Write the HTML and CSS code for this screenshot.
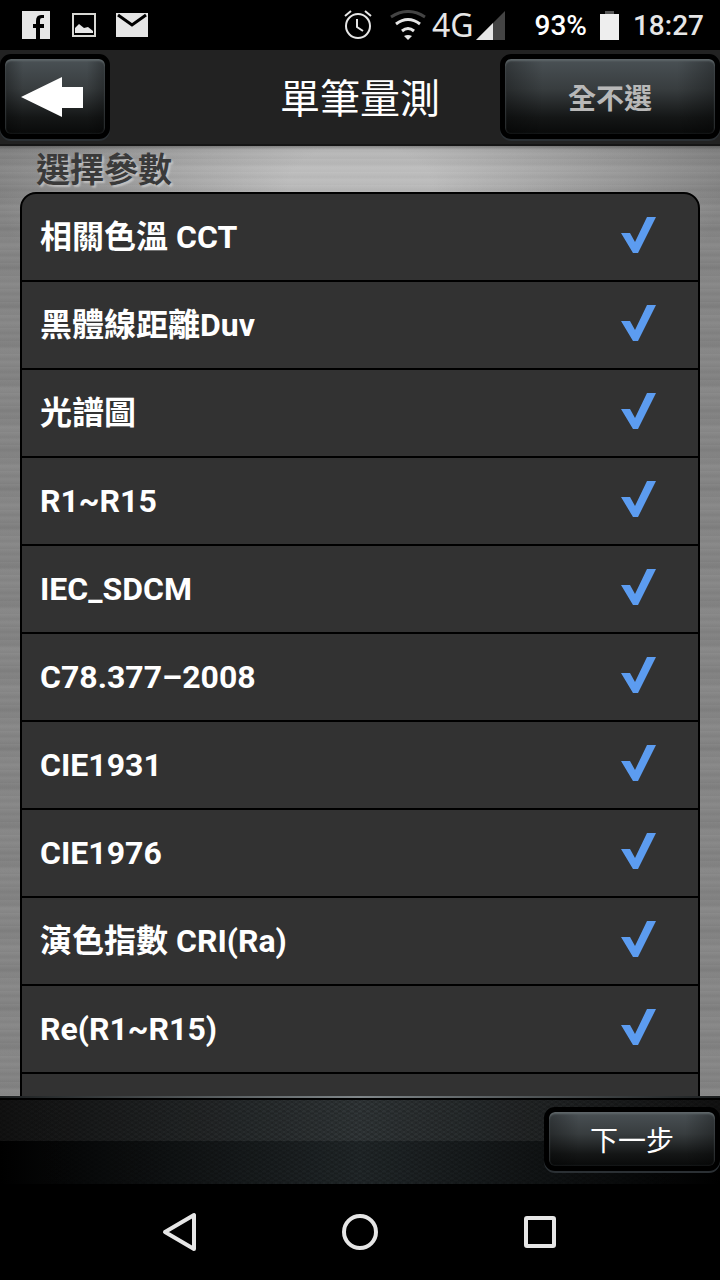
FILE: index.html
```html
<!DOCTYPE html>
<html lang="zh-Hant">
<head>
  <meta charset="UTF-8">
  <meta name="viewport" content="width=device-width,initial-scale=1">
  <title>單筆量測</title>
  <link rel="stylesheet" href="styles.css">
</head>
<body>

  <div class="status">
    <div class="status-left">
      <svg width="28" height="28" viewBox="0 0 28 28"><path fill="#e6e6e6" d="M0 0h28v28H18V17h4v-4h-4V9q0-2 2-2h2V4h-3q-5 0-5 6v3h-3v4h3v11H0z"/></svg>
      <svg class="picture" width="24" height="24" viewBox="0 0 24 24"><path fill="none" stroke="#d8d8d4" stroke-width="2" d="M1 1h22v22H1z"/><path fill="#e6e6e6" d="M3 20v-5l4-4 5 4 4-1 5 4v2z"/></svg>
      <svg class="mail" width="32" height="24" viewBox="0 0 32 24"><path fill="#e6e6e6" d="M0 0h32v24H0z"/><path fill="none" stroke="#000" stroke-width="3" d="M2 2l14 10L30 2"/></svg>
    </div>
    <div class="status-right">
      <svg class="alarm" width="28" height="30" viewBox="0 0 28 30"><g fill="none" stroke="#e6e6e6" stroke-width="2"><circle cx="14" cy="16" r="12"/><path d="M13 9v8l6 4"/><path d="M1 6l6-5M27 6l-6-5"/></g></svg>
      <svg class="wifi" width="36" height="30" viewBox="0 0 36 30"><g fill="none" stroke="#e6e6e6" stroke-width="3"><path stroke="#444" d="M1 7q17-11 34 0"/><path d="M6 14q12-9 24 0"/><path d="M12 21q6-5 12 0"/></g><path fill="#e6e6e6" d="M14 26q4-2 8 0l-4 4z"/></svg>
      <span class="network">4G</span>
      <svg class="signal" width="29" height="29" viewBox="0 0 29 29"><path fill="#444" d="M29 0v29H0z"/><path fill="#e6e6e6" d="M17 12v17H0z"/></svg>
      <span class="charge">93%</span>
      <svg class="battery" width="19" height="29" viewBox="0 0 19 29"><path fill="#555" d="M5 0h9v4H5z"/><path fill="#eee" d="M0 3h19v26H0z"/></svg>
      <time class="clock">18:27</time>
    </div>
  </div>

  <header class="topbar">
    <button class="btn back" type="button" aria-label="返回">
      <svg width="70" height="40" viewBox="0 0 70 40"><path fill="#fff" d="M1 20L42 0v10h21v21H42v9z"/></svg>
    </button>
    <h1>單筆量測</h1>
    <button class="btn deselect" type="button">全不選</button>
  </header>

  <main class="content">
    <h2>選擇參數</h2>
    <ul class="params">
      <li><label for="p1">相關色溫 CCT</label><input type="checkbox" id="p1" checked></li>
      <li><label for="p2">黑體線距離Duv</label><input type="checkbox" id="p2" checked></li>
      <li><label for="p3">光譜圖</label><input type="checkbox" id="p3" checked></li>
      <li><label for="p4">R1~R15</label><input type="checkbox" id="p4" checked></li>
      <li><label for="p5">IEC_SDCM</label><input type="checkbox" id="p5" checked></li>
      <li><label for="p6">C78.377–2008</label><input type="checkbox" id="p6" checked></li>
      <li><label for="p7">CIE1931</label><input type="checkbox" id="p7" checked></li>
      <li><label for="p8">CIE1976</label><input type="checkbox" id="p8" checked></li>
      <li><label for="p9">演色指數 CRI(Ra)</label><input type="checkbox" id="p9" checked></li>
      <li><label for="p10">Re(R1~R15)</label><input type="checkbox" id="p10" checked></li>
      <li></li>
    </ul>
  </main>

  <footer class="toolbar">
    <button class="btn next" type="button">下一步</button>
  </footer>

  <nav class="sysnav">
    <button type="button" aria-label="Back"><svg width="40" height="40" viewBox="0 0 40 40"><path d="M34 3v34L5 20z"/></svg></button>
    <button type="button" aria-label="Home"><svg width="40" height="40" viewBox="0 0 40 40"><circle cx="20" cy="20" r="16"/></svg></button>
    <button type="button" aria-label="Recent"><svg width="40" height="40" viewBox="0 0 40 40"><rect x="6" y="6" width="28" height="28" rx="1"/></svg></button>
  </nav>

</body>
</html>
```
FILE: styles.css
```css
:root {
  --panel: #323232;
  --bar: #222222;
  --check: #5c9cf0;
  --icon: #e6e6e6;
}
* { box-sizing: border-box; margin: 0; padding: 0; }
body {
  height: 100vh;
  display: flex;
  flex-direction: column;
  background: #000;
  color: #fff;
  font-family: Roboto, "Noto Sans CJK TC", sans-serif;
}
svg { display: block; flex: none; }
button { font-family: inherit; cursor: pointer; }

/* Status bar */
.status {
  height: 50px;
  flex: none;
  display: flex;
  justify-content: space-between;
  align-items: center;
  padding: 0 16px 0 22px;
}
.status-left, .status-right { display: flex; align-items: center; }
.picture { margin-left: 22px; }
.mail { margin-left: 20px; }
.wifi { margin-left: 18px; }
.network {
  margin-left: 6px;
  font: 400 32px/36px "Noto Sans", sans-serif;
  color: var(--icon);
}
.signal { margin-left: 2px; }
.charge {
  margin-left: 30px;
  font-size: 28px;
  font-weight: 500;
}
.battery { margin-left: 13px; }
.clock {
  margin-left: 14px;
  font-size: 28px;
  font-weight: 500;
  color: var(--icon);
}

/* Title bar */
.topbar {
  height: 96px;
  flex: none;
  display: grid;
  grid-template-columns: 1fr auto 1fr;
  align-items: start;
  padding-top: 4px;
  background: var(--bar);
  border-bottom: 2px solid #151515;
}
.topbar h1 {
  font-size: 40px;
  font-weight: 400;
  line-height: 92px;
}
.btn {
  border: 5px solid #000;
  border-radius: 11px;
  background:
    linear-gradient(90deg, rgba(0,0,0,.3), transparent 18%, transparent 82%, rgba(0,0,0,.3)),
    linear-gradient(#4a5155, #383d3f 40%, #141616 78%, #090a0a);
  background-clip: padding-box;
  background-color: #000;
  box-shadow: 0 2px 0 #2b3034, inset 0 2px 2px #5f676a, inset 0 0 2px #33383a;
  color: #fff;
  display: flex;
  align-items: center;
  justify-content: center;
}
.back { width: 110px; height: 85px; }
.deselect {
  width: 220px;
  height: 85px;
  justify-self: end;
  font-size: 28px;
  font-weight: 700;
  color: #b8b8b8;
}

/* Brushed metal area */
.content {
  flex: 1;
  min-height: 0;
  overflow-y: auto;
  scrollbar-width: none;
  padding: 0 20px;
  background:
    linear-gradient(rgba(0,0,0,.3), transparent 4px),
    repeating-linear-gradient(rgba(255,255,255,.03) 0, rgba(0,0,0,.03) 5px, rgba(255,255,255,.03) 8px, rgba(0,0,0,.02) 13px),
    repeating-linear-gradient(transparent 0, rgba(0,0,0,.03) 11px, rgba(255,255,255,.03) 23px, transparent 37px),
    radial-gradient(ellipse 50% 200px at 50% 40px, #bcbcbc 20%, #848484);
}
.content h2 {
  height: 46px;
  padding-left: 16px;
  font-size: 34px;
  font-weight: 700;
  line-height: 48px;
  color: #3a3a3a;
  text-shadow: 2px 2px 2px rgba(220,220,220,.6);
}
.params {
  list-style: none;
  border: 2px solid #000;
  border-radius: 16px 16px 0 0;
  background: var(--panel);
}
.params li {
  height: 88px;
  display: flex;
  align-items: center;
  padding: 0 42px 0 18px;
  border-bottom: 2px solid #000;
}
.params label {
  flex: 1;
  font-size: 32px;
  font-weight: 700;
  line-height: 48px;
}
.params input {
  appearance: none;
  width: 35px;
  height: 40px;
  background: #444;
  clip-path: polygon(0 16px, 9px 16px, 14px 25px, 26px 0, 35px 0, 17px 36px, 12px 36px);
}
.params input:checked { background: var(--check); }

/* Bottom bar */
.toolbar {
  height: 88px;
  flex: none;
  display: flex;
  justify-content: flex-end;
  align-items: flex-start;
  padding-top: 11px;
  background:
    linear-gradient(90deg, #1c1f20, #80878a 50%, #1c1f20) top / 100% 2px no-repeat,
    linear-gradient(#000, #000) 0 2px / 100% 2px no-repeat,
    repeating-linear-gradient(30deg, rgba(0,0,0,.12) 0 2px, transparent 2px 4px),
    repeating-linear-gradient(-30deg, rgba(0,0,0,.12) 0 2px, transparent 2px 4px),
    linear-gradient(rgba(255,255,255,.07) 45px, transparent 45px),
    linear-gradient(90deg, #000, #22282a 50%, #000);
}
.next {
  width: 176px;
  height: 64px;
  font-size: 28px;
  font-weight: 400;
}

/* System navigation */
.sysnav {
  height: 96px;
  flex: none;
  display: flex;
  justify-content: center;
  align-items: center;
  gap: 140px;
}
.sysnav button { background: none; border: none; }
.sysnav svg {
  fill: none;
  stroke: var(--icon);
  stroke-width: 4;
  stroke-linejoin: round;
}
```
